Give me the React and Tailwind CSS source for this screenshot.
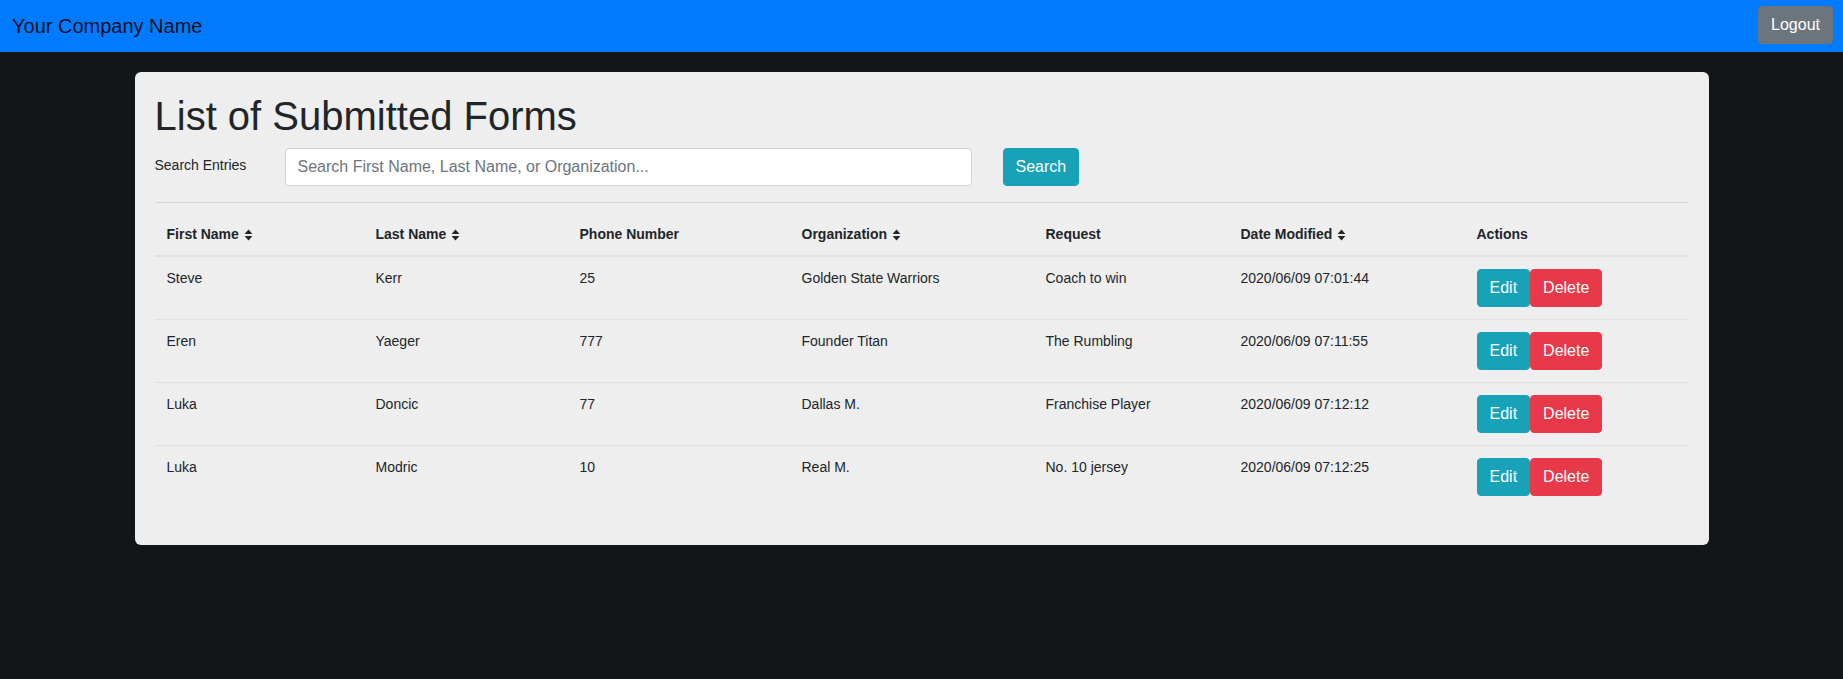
import React from 'react';

const rows = [
  { first: 'Steve', last: 'Kerr', phone: '25', org: 'Golden State Warriors', request: 'Coach to win', date: '2020/06/09 07:01:44' },
  { first: 'Eren', last: 'Yaeger', phone: '777', org: 'Founder Titan', request: 'The Rumbling', date: '2020/06/09 07:11:55' },
  { first: 'Luka', last: 'Doncic', phone: '77', org: 'Dallas M.', request: 'Franchise Player', date: '2020/06/09 07:12:12' },
  { first: 'Luka', last: 'Modric', phone: '10', org: 'Real M.', request: 'No. 10 jersey', date: '2020/06/09 07:12:25' },
];

const headers = [
  { label: 'First Name', sort: true },
  { label: 'Last Name', sort: true },
  { label: 'Phone Number' },
  { label: 'Organization', sort: true },
  { label: 'Request' },
  { label: 'Date Modified', sort: true },
  { label: 'Actions' },
];

const gridCols = 'grid grid-cols-[209px_204px_222px_244px_195px_236px_224px]';

function SortIcon() {
  return (
    <svg width="9" height="12" viewBox="0 0 9 12" className="ml-[5px] shrink-0" fill="#212529">
      <path d="M0.6 5 L4.5 0.6 L8.4 5 Z" />
      <path d="M0.6 7 L4.5 11.4 L8.4 7 Z" />
    </svg>
  );
}

export default function App() {
  return (
    <div className="min-h-screen bg-[#131619] font-['Liberation_Sans',Arial,sans-serif] text-[#212529]">
      {/* Navbar */}
      <nav className="h-[52px] bg-[#007bff] flex items-center justify-between pl-3 pr-[10px]">
        <span className="text-[20px] leading-[30px] text-black/90">Your Company Name</span>
        <button className="h-[38px] px-3 mt-[-2px] rounded border border-[#6c757d] bg-[#6c757d] text-white text-base leading-6">
          Logout
        </button>
      </nav>

      {/* Card */}
      <div className="mt-5 mx-auto w-[1574px] bg-[#eeeeee] rounded-md px-5 pt-5 pb-[37px]">
        <h1 className="text-[40px] leading-[48px] font-normal mb-2">List of Submitted Forms</h1>

        <div className="flex items-start h-[38px]">
          <label className="w-[130px] pt-[7px] text-[14px] leading-[21px]">Search Entries</label>
          <input
            type="text"
            placeholder="Search First Name, Last Name, or Organization..."
            className="w-[687px] h-[38px] px-3 rounded border border-[#ced4da] bg-white text-base placeholder:text-[#6c757d] outline-none"
          />
          <button className="ml-[31px] h-[38px] px-3 rounded border border-[#17a2b8] bg-[#17a2b8] text-white text-base leading-6">
            Search
          </button>
        </div>

        <div className="mt-4 border-t border-black/10" />

        <div className="mt-[9px] text-[14px]">
          <div className={`${gridCols} border-b-2 border-[#dee2e6]`}>
            {headers.map((h) => (
              <div key={h.label} className="px-3 pt-3 pb-2.5 font-bold leading-[21px] flex items-center">
                {h.label}
                {h.sort && <SortIcon />}
              </div>
            ))}
          </div>

          {rows.map((r, i) => (
            <div key={i} className={`${gridCols} ${i < rows.length - 1 ? 'border-b border-[#dee2e6]' : ''}`}>
              {[r.first, r.last, r.phone, r.org, r.request, r.date].map((v, j) => (
                <div key={j} className="px-3 pt-3 leading-[18px]">{v}</div>
              ))}
              <div className="px-3 py-3 flex">
                <button className="h-[38px] px-3 rounded border border-[#17a2b8] bg-[#17a2b8] text-white text-base leading-6">Edit</button>
                <button className="h-[38px] px-3 rounded border border-[#e8394a] bg-[#e8394a] text-white text-base leading-6">Delete</button>
              </div>
            </div>
          ))}
        </div>
      </div>
    </div>
  );
}
